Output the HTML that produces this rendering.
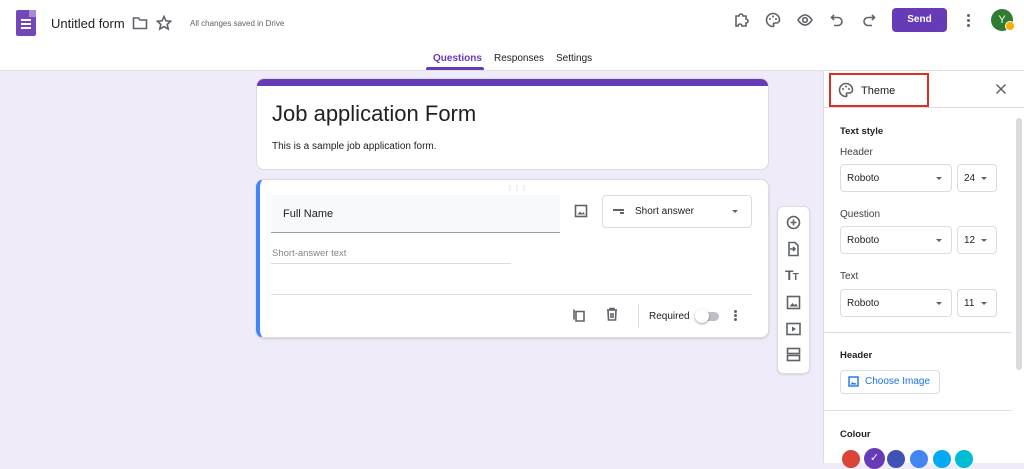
<!DOCTYPE html><html><head><meta charset="utf-8"><style>
*{box-sizing:border-box;margin:0;padding:0}
body{width:1024px;height:463px;overflow:hidden;background:#f0ebf8;font-family:"Liberation Sans",Arial,sans-serif;color:#202124;position:relative}
.a{position:absolute}
svg{display:block}
.sel{position:absolute;border:1px solid #dadce0;border-radius:4px;background:#fff;font-size:10px;color:#202124;padding-left:6px;display:flex;align-items:center}
.sel:after{content:"";position:absolute;right:9px;top:50%;margin-top:-1px;border:3px solid transparent;border-top:3px solid #5f6368}
.lbl{position:absolute;font-size:10px;color:#3c4043}
.ic{stroke:#5f6368;fill:none;stroke-width:1.6}
</style></head><body>
<div class="a" style="left:0;top:0;width:1024px;height:71px;background:#fff;border-bottom:1px solid #e0e0e0"></div>
<div class="a" style="left:16px;top:10px;width:20px;height:26px;background:#7248b9;border-radius:2px"></div>
<div class="a" style="left:29px;top:10px;width:7px;height:7px;background:#a58bd6"></div>
<div class="a" style="left:21px;top:19px;width:10px;height:2px;background:#fff;box-shadow:0 4px #fff,0 8px #fff"></div>
<div class="a" style="left:51px;top:16px;font-size:13px;color:#202124">Untitled form</div>
<svg class="a" style="left:132px;top:16px" width="16" height="14"><path class="ic" d="M1.5 2h5l1.5 2h6.5v8.5h-13z"/></svg>
<svg class="a" style="left:156px;top:15px" width="16" height="16"><path class="ic" d="M8 1.5l2 4.3 4.6.5-3.4 3.1 1 4.6L8 11.6 3.8 14l1-4.6L1.4 6.3 6 5.8z"/></svg>
<div class="a" style="left:190px;top:19px;font-size:8px;color:#5f6368">All changes saved in Drive</div>
<svg class="a" style="left:733px;top:12px" width="16" height="16"><path class="ic" d="M3 4h3a2 2 0 014 0h3v3a2 2 0 010 4v3H9a2 2 0 00-4 0H3z"/></svg>
<svg class="a" style="left:765px;top:12px" width="16" height="16"><path class="ic" d="M8 1.5a6.5 6.5 0 100 13c1 0 1-1 .5-1.8-.5-.8 0-1.7 1-1.7h2A3 3 0 0014.5 8 6.5 6.5 0 008 1.5z"/><circle cx="5" cy="7" r="1" fill="#5f6368"/><circle cx="8" cy="4.5" r="1" fill="#5f6368"/><circle cx="11" cy="7" r="1" fill="#5f6368"/></svg>
<svg class="a" style="left:797px;top:12px" width="16" height="16"><path class="ic" d="M1 8s3-5 7-5 7 5 7 5-3 5-7 5-7-5-7-5z"/><circle class="ic" cx="8" cy="8" r="2.3"/></svg>
<svg class="a" style="left:830px;top:12px" width="14" height="16"><path class="ic" d="M4 3L1.5 5.5 4 8M2 5.5h6a4 4 0 010 8H4"/></svg>
<svg class="a" style="left:862px;top:12px" width="14" height="16"><path class="ic" d="M10 3l2.5 2.5L10 8M12 5.5H6a4 4 0 000 8h4"/></svg>
<div class="a" style="left:892px;top:8px;width:55px;height:24px;background:#673ab7;border-radius:4px;color:#fff;font-size:10px;font-weight:bold;text-align:center;line-height:24px">Send</div>
<div class="a" style="left:967px;top:14px;width:3px;height:3px;background:#5f6368;border-radius:50%;box-shadow:0 5px #5f6368,0 10px #5f6368"></div>
<div class="a" style="left:991px;top:9px;width:22px;height:22px;background:#2e7d32;border-radius:50%;color:#fff;font-size:11px;text-align:center;line-height:22px">Y</div>
<div class="a" style="left:1005px;top:21px;width:10px;height:10px;background:#f9ab00;border-radius:50%;border:1px solid #fff"></div>
<div class="a" style="left:433px;top:53px;font-size:10px;color:#673ab7;font-weight:bold">Questions</div>
<div class="a" style="left:426px;top:67px;width:58px;height:3px;background:#673ab7;border-radius:2px 2px 0 0"></div>
<div class="a" style="left:494px;top:53px;font-size:10px;color:#202124">Responses</div>
<div class="a" style="left:556px;top:53px;font-size:10px;color:#202124">Settings</div>

<div class="a" style="left:256px;top:78px;width:513px;height:92px;background:#fff;border-radius:8px;border:1px solid #dadce0;overflow:hidden">
<div style="height:7px;background:#673ab7"></div>
<div style="position:absolute;left:15px;top:22px;font-size:22px;color:#202124">Job application Form</div>
<div style="position:absolute;left:15px;top:62px;font-size:10px;color:#202124">This is a sample job application form.</div>
</div>

<div class="a" style="left:256px;top:179px;width:513px;height:159px;background:#fff;border-radius:8px;border:1px solid #dadce0;border-left:4px solid #4285f4;box-shadow:0 1px 2px rgba(0,0,0,.15)"></div>
<div class="a" style="left:507px;top:185px;font-size:6px;color:#aaa;letter-spacing:1px">⋮⋮⋮</div>
<div class="a" style="left:271px;top:195px;width:289px;height:38px;background:#f8f9fa;border-bottom:1px solid #9aa0a6"></div>
<div class="a" style="left:283px;top:208px;font-size:11px;color:#202124">Full Name</div>
<svg class="a" style="left:574px;top:204px" width="14" height="14"><rect class="ic" x="1.5" y="1.5" width="11" height="11"/><path d="M3.5 10.5l2.5-3 2 2 1.5-1.5 1.5 2.5z" fill="#5f6368"/></svg>
<div class="a" style="left:602px;top:195px;width:150px;height:33px;border:1px solid #dadce0;border-radius:4px;background:#fff"></div>
<div class="a" style="left:613px;top:209px;width:11px;height:1.5px;background:#5f6368;box-shadow:0 3px #5f6368"></div>
<div class="a" style="left:613px;top:212px;width:7px;height:1.5px;background:#fff"></div>
<div class="a" style="left:635px;top:206px;font-size:10px;color:#202124">Short answer</div>
<div class="a" style="left:732px;top:210px;border:3px solid transparent;border-top:3px solid #5f6368"></div>
<div class="a" style="left:272px;top:248px;font-size:9.5px;color:#80868b">Short-answer text</div>
<div class="a" style="left:271px;top:263px;width:240px;height:1px;background:#dadce0"></div>
<div class="a" style="left:271px;top:294px;width:481px;height:1px;background:#e0e0e0"></div>
<svg class="a" style="left:572px;top:308px" width="14" height="15"><path class="ic" d="M4 3.5h8v9.5H4zM2 1.5v10"/></svg>
<svg class="a" style="left:605px;top:307px" width="14" height="15"><path class="ic" d="M2 3h10M5 3V1.5h4V3M3 3l.5 10h7L11 3M6 6v5M8 6v5"/></svg>
<div class="a" style="left:638px;top:304px;width:1px;height:24px;background:#dadce0"></div>
<div class="a" style="left:649px;top:311px;font-size:10px;color:#202124">Required</div>
<div class="a" style="left:697px;top:312px;width:22px;height:9px;background:#bdc1c6;border-radius:5px"></div>
<div class="a" style="left:695px;top:309px;width:14px;height:14px;background:#fff;border-radius:50%;box-shadow:0 1px 2px rgba(0,0,0,.4)"></div>
<div class="a" style="left:734px;top:310px;width:3px;height:3px;background:#5f6368;border-radius:50%;box-shadow:0 4px #5f6368,0 8px #5f6368"></div>

<div class="a" style="left:777px;top:206px;width:33px;height:168px;background:#fff;border-radius:6px;border:1px solid #dadce0;box-shadow:0 1px 2px rgba(0,0,0,.1)"></div>
<svg class="a" style="left:786px;top:215px" width="15" height="15"><circle class="ic" cx="7.5" cy="7.5" r="6"/><path class="ic" d="M7.5 4.5v6M4.5 7.5h6"/></svg>
<svg class="a" style="left:786px;top:241px" width="15" height="16"><path class="ic" d="M3 1.5h6l3 3v10H3zM4 8h5M7 6l2 2-2 2"/></svg>
<div class="a" style="left:785px;top:267px;font-size:14px;font-weight:bold;color:#5f6368;letter-spacing:-1px">T<span style="font-size:10px">T</span></div>
<svg class="a" style="left:786px;top:295px" width="15" height="15"><rect class="ic" x="1.5" y="1.5" width="12" height="12"/><path d="M3.5 11.5l3-3.5 2 2 1.5-1.5 2 3z" fill="#5f6368"/></svg>
<svg class="a" style="left:786px;top:322px" width="15" height="14"><rect class="ic" x="1" y="1.5" width="13" height="11"/><path d="M6 4.5l4 2.5-4 2.5z" fill="#5f6368"/></svg>
<svg class="a" style="left:786px;top:347px" width="15" height="15"><rect class="ic" x="1.5" y="1.5" width="12" height="5"/><rect class="ic" x="1.5" y="8.5" width="12" height="5"/></svg>

<div class="a" style="left:823px;top:71px;width:201px;height:392px;background:#fff;border-left:1px solid #dadce0"></div>
<div class="a" style="left:823px;top:107px;width:201px;height:1px;background:#dadce0"></div>
<div class="a" style="left:829px;top:73px;width:100px;height:34px;border:2px solid #d93025"></div>
<svg class="a" style="left:838px;top:82px" width="16" height="16"><path class="ic" d="M8 1.5a6.5 6.5 0 100 13c1 0 1-1 .5-1.8-.5-.8 0-1.7 1-1.7h2A3 3 0 0014.5 8 6.5 6.5 0 008 1.5z"/><circle cx="5" cy="7" r="1" fill="#5f6368"/><circle cx="8" cy="4.5" r="1" fill="#5f6368"/><circle cx="11" cy="7" r="1" fill="#5f6368"/></svg>
<div class="a" style="left:861px;top:85px;font-size:11px;color:#202124">Theme</div>
<svg class="a" style="left:995px;top:83px" width="12" height="12"><path d="M1.5 1.5l9 9M10.5 1.5l-9 9" stroke="#5f6368" stroke-width="1.5"/></svg>
<div class="a" style="left:1016px;top:118px;width:6px;height:252px;background:#dadce0;border-radius:3px"></div>
<div class="a" style="left:840px;top:126px;font-size:9.5px;color:#202124;font-weight:bold">Text style</div>
<div class="lbl" style="left:840px;top:147px">Header</div>
<div class="sel" style="left:840px;top:164px;width:112px;height:28px">Roboto</div>
<div class="sel" style="left:957px;top:164px;width:40px;height:28px">24</div>
<div class="lbl" style="left:840px;top:209px">Question</div>
<div class="sel" style="left:840px;top:226px;width:112px;height:28px">Roboto</div>
<div class="sel" style="left:957px;top:226px;width:40px;height:28px">12</div>
<div class="lbl" style="left:840px;top:271px">Text</div>
<div class="sel" style="left:840px;top:289px;width:112px;height:28px">Roboto</div>
<div class="sel" style="left:957px;top:289px;width:40px;height:28px">11</div>
<div class="a" style="left:824px;top:332px;width:188px;height:1px;background:#e0e0e0"></div>
<div class="a" style="left:840px;top:350px;font-size:9.5px;color:#202124;font-weight:bold">Header</div>
<div class="a" style="left:840px;top:370px;width:100px;height:24px;border:1px solid #dadce0;border-radius:4px"></div>
<svg class="a" style="left:848px;top:376px" width="11" height="11"><rect x="1" y="1" width="9" height="9" fill="none" stroke="#1a73e8" stroke-width="1.4"/><path d="M2.5 8.5l2-2.5 1.5 1.5 1-1 1.5 2z" fill="#1a73e8"/></svg>
<div class="a" style="left:865px;top:376px;font-size:10px;color:#1a73e8">Choose Image</div>
<div class="a" style="left:824px;top:410px;width:188px;height:1px;background:#e0e0e0"></div>
<div class="a" style="left:840px;top:429px;font-size:9.5px;color:#202124;font-weight:bold">Colour</div>
<div class="a" style="left:842px;top:450px;width:18px;height:18px;border-radius:50%;background:#db4437"></div>
<div class="a" style="left:864px;top:448px;width:21px;height:21px;border-radius:50%;background:#673ab7;color:#fff;font-size:11px;text-align:center;line-height:21px">✓</div>
<div class="a" style="left:887px;top:450px;width:18px;height:18px;border-radius:50%;background:#3f51b5"></div>
<div class="a" style="left:910px;top:450px;width:18px;height:18px;border-radius:50%;background:#4285f4"></div>
<div class="a" style="left:933px;top:450px;width:18px;height:18px;border-radius:50%;background:#03a9f4"></div>
<div class="a" style="left:955px;top:450px;width:18px;height:18px;border-radius:50%;background:#00bcd4"></div>
</body></html>
